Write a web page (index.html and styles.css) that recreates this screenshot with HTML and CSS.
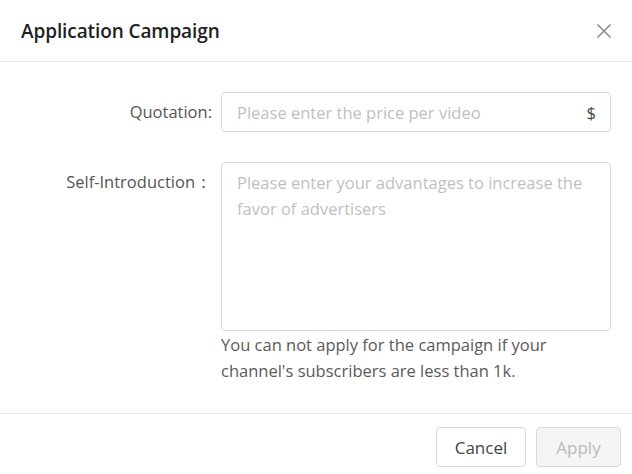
FILE: index.html
```html
<!DOCTYPE html>
<html>
<head>
<meta charset="utf-8">
<link rel="stylesheet" href="styles.css">
</head>
<body>
<div class="dialog">
  <div class="header">
    <div class="title">Application Campaign</div>
    <div class="close">
      <svg width="16" height="16" viewBox="0 0 16 16"><path d="M1.5 1.5 L14.5 14.5 M14.5 1.5 L1.5 14.5" stroke="#8c8c8c" stroke-width="1.6" fill="none"/></svg>
    </div>
  </div>
  <div class="body">
    <div class="row">
      <div class="label">Quotation:</div>
      <div class="field">
        <div class="input">
          <span class="ph">Please enter the price per video</span>
          <span class="suffix">$</span>
        </div>
      </div>
    </div>
    <div class="row row2">
      <div class="label">Self-Introduction：</div>
      <div class="field">
        <div class="textarea"><span class="ph">Please enter your advantages to increase the favor of advertisers</span></div>
        <div class="help">You can not apply for the campaign if your channel's subscribers are less than 1k.</div>
      </div>
    </div>
  </div>
  <div class="footer">
    <div class="btn">Cancel</div>
    <div class="btn disabled">Apply</div>
  </div>
</div>
</body>
</html>
```
FILE: styles.css
```css
html, body { margin: 0; padding: 0; background: #fff; }
body { font-family: "Open Sans", "Noto Sans", sans-serif; width: 632px; height: 474px; overflow: hidden; }
.dialog { width: 632px; }
.header { height: 62px; border-bottom: 1px solid #e8e8e8; display: flex; align-items: center; justify-content: space-between; padding: 0 20px 0 21px; box-sizing: border-box; }
.title { font-size: 19px; color: #222; font-weight: 600; letter-spacing: -0.1px; }
.close { width: 16px; height: 16px; display: flex; }
.body { padding: 30px 21px 0 0; height: 352px; box-sizing: border-box; border-bottom: 1px solid #e8e8e8; }
.row { display: flex; }
.row2 { margin-top: 30px; }
.label { width: 212px; text-align: right; font-size: 16.5px; color: #555; padding-top: 8px; box-sizing: border-box; }
.field { margin-left: 9px; width: 390px; }
.input { height: 40px; border: 1px solid #d9d9d9; border-radius: 4px; box-sizing: border-box; display: flex; align-items: center; justify-content: space-between; padding: 0 14px 0 15px; font-size: 16.5px; }
.ph { color: #bfbfbf; }
.suffix { color: #444; }
.textarea { height: 169px; border: 1px solid #d9d9d9; border-radius: 4px; box-sizing: border-box; padding: 7px 15px; font-size: 16.5px; line-height: 26px; }
.help { font-size: 16.5px; color: #5a5a5a; line-height: 26px; margin-top: 1px; width: 345px; }
.footer { display: flex; justify-content: flex-end; gap: 10px; padding: 13px 11px 0 0; }
.btn { width: 90px; height: 40px; border: 1px solid #d9d9d9; border-radius: 4px; box-sizing: border-box; display: flex; align-items: center; justify-content: center; font-size: 17px; color: #444; background: #fff; }
.btn.disabled { width: 85px; background: #f5f5f5; color: #bbb; }
```
